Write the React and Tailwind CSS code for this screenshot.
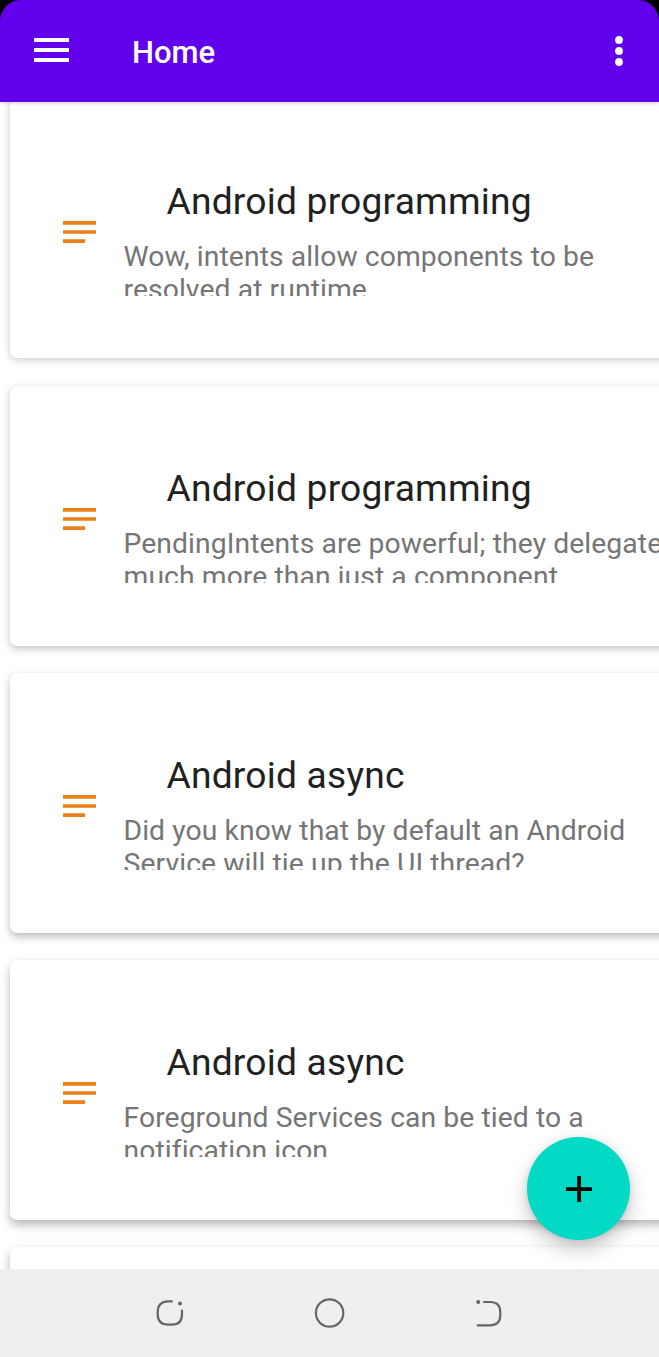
const notes = [
  { title: "Android programming", lines: ["Wow, intents allow components to be", "resolved at runtime"] },
  { title: "Android programming", lines: ["PendingIntents are powerful; they delegate", "much more than just a component"] },
  { title: "Android async", lines: ["Did you know that by default an Android", "Service will tie up the UI thread?"] },
  { title: "Android async", lines: ["Foreground Services can be tied to a", "notification icon"] },
  { title: "", lines: [] },
];

const shadows = [
  "shadow-[0_2px_8px_rgba(0,0,0,0.2),0_0_2px_rgba(0,0,0,0.06)]",
  "shadow-[0_3px_8px_rgba(0,0,0,0.23),0_0_2px_rgba(0,0,0,0.06)]",
  "shadow-[0_4px_9px_rgba(0,0,0,0.26),0_0_2px_rgba(0,0,0,0.06)]",
  "shadow-[0_5px_10px_rgba(0,0,0,0.28),0_0_2px_rgba(0,0,0,0.06)]",
  "shadow-[0_5px_10px_rgba(0,0,0,0.28),0_0_2px_rgba(0,0,0,0.06)]",
];

function NotesIcon() {
  return (
    <svg viewBox="0 0 24 24" className="mt-[111.5px] size-11 shrink-0" fill="#ec8018">
      <path d="M3.27 6h18v2h-18zM3.27 11h18v2h-18zM3.27 16h12v2h-12z" />
    </svg>
  );
}

function NoteCard({ note, shadow }) {
  return (
    <article className={`flex h-[260px] w-[680px] shrink-0 rounded-[7px] bg-white pl-[47px] ${shadow}`}>
      {note.title && (
        <>
          <NotesIcon />
          <div className="ml-[22.5px] mt-[80.2px] min-w-0">
            <h2 className="pl-[43px] text-[37.2px] leading-[44px] tracking-[0.2px] whitespace-nowrap text-[#212121]">{note.title}</h2>
            <div className="mt-[17.1px] h-[56px] overflow-hidden text-[28.3px] leading-[33.3px] tracking-[0.08px] whitespace-nowrap text-[#757575]">
              {note.lines.map((line) => (
                <p key={line}>{line}</p>
              ))}
            </div>
          </div>
        </>
      )}
    </article>
  );
}

export default function App() {
  return (
    <div className="relative flex h-[1357px] w-[659px] flex-col overflow-hidden bg-white font-['Roboto',sans-serif]">
      <div className="z-10 h-[102px] shrink-0 bg-[linear-gradient(#000_0_22px,#6200ee_22px)] shadow-[0_1px_4px_rgba(0,0,0,0.2)]">
        <header className="flex h-[102px] items-center rounded-t-[21px] bg-[#6200ee] text-white">
          <svg viewBox="0 0 35 24" className="-mt-0.5 ml-[34px] h-6 w-[35px]" fill="currentColor">
            <path d="M0 0h35v4H0zM0 10h35v4H0zM0 20h35v4H0z" />
          </svg>
          <h1 className="ml-[63px] mt-[4px] text-[31px] font-medium leading-9">Home</h1>
          <svg viewBox="0 0 8 30" className="-mt-px ml-auto mr-[36.5px] h-[30px] w-2" fill="currentColor">
            <circle cx="4" cy="4" r="3.9" />
            <circle cx="4" cy="15" r="3.9" />
            <circle cx="4" cy="26" r="3.9" />
          </svg>
        </header>
      </div>
      <main className="min-h-0 flex-1 overflow-hidden">
        <div className="-mt-[3.7px] flex flex-col gap-[27.2px] pl-[10px]">
          {notes.map((note, i) => (
            <NoteCard key={i} note={note} shadow={shadows[i]} />
          ))}
        </div>
      </main>
      <nav className="z-10 flex h-[88px] shrink-0 items-center justify-center bg-[#efefef] text-[#666]">
        <svg viewBox="0 0 32 32" className="size-8" fill="none" stroke="currentColor" strokeWidth="2.2" strokeLinecap="round">
          <path d="M16.8 4.4H13.3Q2.7 4.4 2.7 15V17.3Q2.7 27.7 13.3 27.7H16.8Q27 27.7 27 17.3V13.5" />
          <circle cx="25" cy="6.4" r="0.9" fill="currentColor" />
        </svg>
        <svg viewBox="0 0 32 32" className="mx-[127px] size-8" fill="none" stroke="currentColor" strokeWidth="2.2">
          <circle cx="15.6" cy="16" r="13.7" />
        </svg>
        <svg viewBox="0 0 32 32" className="size-8" fill="none" stroke="currentColor" strokeWidth="2.2" strokeLinecap="round">
          <path d="M11 5H17Q27.3 5 27.3 15V18Q27.3 28.3 17 28.3H4.7" />
          <circle cx="5.2" cy="5" r="0.9" fill="currentColor" />
        </svg>
      </nav>
      <button
        aria-label="Add note"
        className="absolute left-[527px] top-[1137px] z-20 flex size-[103px] items-center justify-center rounded-full bg-[#03dac5] shadow-[0_9px_20px_rgba(0,0,0,0.22),0_1px_6px_rgba(0,0,0,0.1)]"
      >
        <svg viewBox="0 0 26 26" className="size-[26px]" fill="#000">
          <path d="M11.2 0h3.7v11.2H26v3.7H14.9V26h-3.7V14.9H0v-3.7h11.2z" />
        </svg>
      </button>
    </div>
  );
}
